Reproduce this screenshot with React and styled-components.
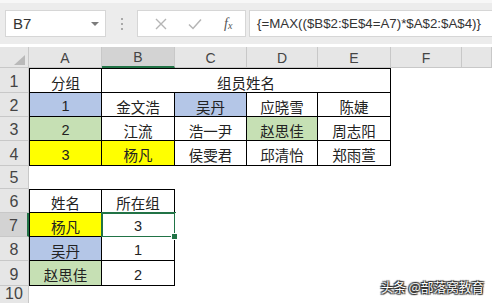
import React from "react";
import styled, { createGlobalStyle } from "styled-components";

const GlobalStyle = createGlobalStyle`
  html, body {
    margin: 0;
    padding: 0;
    background: #ffffff;
  }
  body {
    font-family: "Liberation Sans", "Noto Sans CJK SC", sans-serif;
    overflow: hidden;
  }
`;

const BLUE = "#b4c6e7";
const GREEN = "#c6e0b4";
const YELLOW = "#ffff00";
const EXCEL_GREEN = "#217346";

const colWidths = [29, 73, 73, 72, 71, 73, 71];
const rowHeights = [25, 24, 24, 25, 23, 24, 24, 24, 25];
const colNames = ["A", "B", "C", "D", "E", "F"];

// each row: list of cells { text, fill, border, span, top, left, selected }
const rows = [
  [
    { text: "分组", border: true, top: true, left: true },
    { text: "组员姓名", border: true, top: true, span: 4 },
    {},
    {},
  ],
  [
    { text: "1", fill: BLUE, border: true, left: true },
    { text: "金文浩", border: true },
    { text: "吴丹", fill: BLUE, border: true },
    { text: "应晓雪", border: true },
    { text: "陈婕", border: true },
    {},
    {},
  ],
  [
    { text: "2", fill: GREEN, border: true, left: true },
    { text: "江流", border: true },
    { text: "浩一尹", border: true },
    { text: "赵思佳", fill: GREEN, border: true },
    { text: "周志阳", border: true },
    {},
    {},
  ],
  [
    { text: "3", fill: YELLOW, border: true, left: true },
    { text: "杨凡", fill: YELLOW, border: true },
    { text: "侯雯君", border: true },
    { text: "邱清怡", border: true },
    { text: "郑雨萱", border: true },
    {},
    {},
  ],
  [{}, {}, {}, {}, {}, {}, {}],
  [
    { text: "姓名", border: true, top: true, left: true },
    { text: "所在组", border: true, top: true },
    {},
    {},
    {},
    {},
    {},
  ],
  [
    { text: "杨凡", fill: YELLOW, border: true, left: true },
    { text: "3", border: true, selected: true },
    {},
    {},
    {},
    {},
    {},
  ],
  [
    { text: "吴丹", fill: BLUE, border: true, left: true },
    { text: "1", border: true },
    {},
    {},
    {},
    {},
    {},
  ],
  [
    { text: "赵思佳", fill: GREEN, border: true, left: true },
    { text: "2", border: true },
    {},
    {},
    {},
    {},
    {},
  ],
  [{}, {}, {}, {}, {}, {}, {}],
];

export default function App() {
  return (
    <Window>
      <GlobalStyle />
      <FormulaBar>
        <NameBox>
          B7
          <Caret />
        </NameBox>
        <Grip>
          <i />
          <i />
          <i />
        </Grip>
        <ButtonBox>
          <IconSlot>
            <svg width="12" height="12" viewBox="0 0 12 12">
              <path d="M1 1 L11 11 M11 1 L1 11" stroke="#b5b5b5" strokeWidth="1.4" fill="none" />
            </svg>
          </IconSlot>
          <IconSlot>
            <svg width="14" height="12" viewBox="0 0 14 12">
              <path d="M1 6.5 L5 10.5 L13 1.5" stroke="#b5b5b5" strokeWidth="1.5" fill="none" />
            </svg>
          </IconSlot>
          <Fx>
            f<sub>x</sub>
          </Fx>
        </ButtonBox>
        <FormulaInput>{"{=MAX(($B$2:$E$4=A7)*$A$2:$A$4)}"}</FormulaInput>
      </FormulaBar>

      <Sheet>
        <Corner>
          <svg width="11" height="10" viewBox="0 0 11 10">
            <path d="M11 0 L11 10 L0 10 Z" fill="#b9b9b9" />
          </svg>
        </Corner>
        {colNames.map((c) => (
          <ColHeader key={c} $active={c === "B"}>
            {c}
          </ColHeader>
        ))}
        <ColHeader />

        {rows.map((row, ri) => (
          <React.Fragment key={ri}>
            <RowHeader $active={ri === 6}>{ri + 1}</RowHeader>
            {row.map((cell, ci) => (
              <Cell
                key={ci}
                $fill={cell.fill}
                $border={cell.border}
                $top={cell.top}
                $left={cell.left}
                $span={cell.span}
                $selected={cell.selected}
              >
                {cell.text}
              </Cell>
            ))}
          </React.Fragment>
        ))}
      </Sheet>

      <Watermark>头条 @部落窝教育</Watermark>
    </Window>
  );
}

const Window = styled.div`
  position: relative;
  width: 492px;
  height: 303px;
  overflow: hidden;
  background: #fff;
  display: flex;
  flex-direction: column;
`;

const FormulaBar = styled.div`
  height: 44px;
  box-sizing: border-box;
  background: #ececec;
  border-top: 3px solid #f7f7f7;
  display: flex;
  align-items: center;
  padding: 0 0 0 5px;
  flex-shrink: 0;
  margin-bottom: 3px;
`;

const NameBox = styled.div`
  width: 101px;
  height: 27px;
  box-sizing: border-box;
  background: #fff;
  border: 1px solid #d6d6d6;
  display: flex;
  align-items: center;
  justify-content: space-between;
  padding: 0 6px 0 7px;
  font-size: 15px;
  color: #333;
`;

const Caret = styled.span`
  width: 0;
  height: 0;
  border-left: 4px solid transparent;
  border-right: 4px solid transparent;
  border-top: 4px solid #7c7c7c;
`;

const Grip = styled.div`
  width: 31px;
  display: flex;
  flex-direction: column;
  align-items: center;
  gap: 3px;

  i {
    width: 2px;
    height: 2px;
    background: #a9a9a9;
  }
`;

const ButtonBox = styled.div`
  width: 109px;
  height: 27px;
  box-sizing: border-box;
  background: #fff;
  border: 1px solid #d6d6d6;
  display: flex;
  align-items: center;
  padding-left: 6px;
`;

const IconSlot = styled.span`
  width: 34px;
  display: flex;
  align-items: center;
  justify-content: center;
`;

const Fx = styled.span`
  width: 34px;
  text-align: center;
  font-family: "Liberation Serif", serif;
  font-style: italic;
  font-size: 14px;
  color: #555;

  sub {
    font-size: 10px;
    vertical-align: -1px;
  }
`;

const FormulaInput = styled.div`
  flex: 1;
  height: 27px;
  margin-left: 3px;
  box-sizing: border-box;
  background: #fff;
  border: 1px solid #d6d6d6;
  border-right: none;
  display: flex;
  align-items: center;
  padding-left: 7px;
  font-size: 13.3px;
  color: #333;
  white-space: nowrap;
`;

const Sheet = styled.div`
  flex: 1;
  display: grid;
  grid-template-columns: ${colWidths.map((w) => w + "px").join(" ")} 1fr;
  grid-template-rows: 21px ${rowHeights.map((h) => h + "px").join(" ")} 1fr;
`;

const Corner = styled.div`
  background: #e6e6e6;
  border-right: 1px solid #c8c8c8;
  border-bottom: 1px solid #c8c8c8;
  display: flex;
  align-items: flex-end;
  justify-content: flex-end;
  padding: 0 3px 2px 0;
`;

const ColHeader = styled.div`
  background: ${(p) => (p.$active ? "#d3d3d3" : "#e6e6e6")};
  border-right: 1px solid #c8c8c8;
  border-bottom: ${(p) => (p.$active ? `2px solid ${EXCEL_GREEN}` : "1px solid #c8c8c8")};
  display: flex;
  align-items: flex-end;
  justify-content: center;
  padding-bottom: 1px;
  font-size: 14px;
  color: #444;
`;

const RowHeader = styled.div`
  background: ${(p) => (p.$active ? "#d3d3d3" : "#e6e6e6")};
  border-right: ${(p) => (p.$active ? `2px solid ${EXCEL_GREEN}` : "1px solid #c8c8c8")};
  border-bottom: 1px solid #c8c8c8;
  display: flex;
  align-items: flex-end;
  justify-content: center;
  font-size: 16px;
  line-height: 16px;
  padding-bottom: 2px;
  color: #444;
`;

const Cell = styled.div`
  position: relative;
  grid-column: span ${(p) => p.$span || 1};
  background: ${(p) => p.$fill || "#fff"};
  border-right: ${(p) => (p.$border ? "1px solid #000" : "none")};
  border-bottom: ${(p) => (p.$border ? "1px solid #000" : "none")};
  border-top: ${(p) => (p.$top ? "1px solid #000" : "none")};
  border-left: ${(p) => (p.$left ? "1px solid #000" : "none")};
  display: flex;
  align-items: center;
  justify-content: center;
  padding-top: 3px;
  font-size: 14.5px;
  color: #222;
  white-space: nowrap;

  ${(p) =>
    p.$selected &&
    `
    &::after {
      content: "";
      position: absolute;
      left: -1px;
      top: -1px;
      right: -2px;
      bottom: -2px;
      border: 2px solid ${EXCEL_GREEN};
    }
    &::before {
      content: "";
      position: absolute;
      right: -4px;
      bottom: -4px;
      width: 5px;
      height: 5px;
      background: ${EXCEL_GREEN};
      border: 1px solid #fff;
      z-index: 2;
    }
  `}
`;

const Watermark = styled.div`
  position: absolute;
  right: 8px;
  bottom: 7px;
  font-family: "Noto Sans CJK SC", sans-serif;
  font-size: 13px;
  color: #fff;
  letter-spacing: -0.3px;
  text-shadow: 0 0 1px #000, 1px 1px 1px #333, -1px -1px 1px #333, 1px -1px 1px #333,
    -1px 1px 1px #333;
`;
